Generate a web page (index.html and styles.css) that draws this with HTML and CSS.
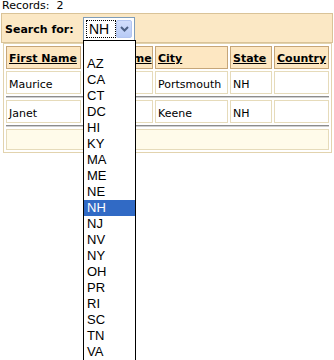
FILE: index.html
```html
<!DOCTYPE html>
<html>
<head>
<meta charset="utf-8">
<title>Records</title>
<link rel="stylesheet" href="styles.css">
</head>
<body>
<div class="records">Records:&nbsp; 2</div>
<div class="search">
  <span class="search-label">Search for:</span>
  <div class="select">
    <span class="select-value">NH</span>
    <span class="select-btn"><svg width="9" height="6" viewBox="0 0 9 6"><path d="M1 1 L4.5 4.5 L8 1" fill="none" stroke="#4d6185" stroke-width="2"/></svg></span>
    <ul class="options">
      <li class="opt-blank"></li>
      <li>AZ</li>
      <li>CA</li>
      <li>CT</li>
      <li>DC</li>
      <li>HI</li>
      <li>KY</li>
      <li>MA</li>
      <li>ME</li>
      <li>NE</li>
      <li class="selected">NH</li>
      <li>NJ</li>
      <li>NV</li>
      <li>NY</li>
      <li>OH</li>
      <li>PR</li>
      <li>RI</li>
      <li>SC</li>
      <li>TN</li>
      <li>VA</li>
    </ul>
  </div>
</div>
<div class="grid">
  <div class="hd"><a>First Name</a></div>
  <div class="hd"><a>Last Name</a></div>
  <div class="hd"><a>City</a></div>
  <div class="hd"><a>State</a></div>
  <div class="hd"><a>Country</a></div>

  <div class="cell">Maurice</div>
  <div class="cell"></div>
  <div class="cell">Portsmouth</div>
  <div class="cell">NH</div>
  <div class="cell"></div>
  <div class="sep"></div>

  <div class="cell">Janet</div>
  <div class="cell"></div>
  <div class="cell">Keene</div>
  <div class="cell">NH</div>
  <div class="cell"></div>
  <div class="sep"></div>

  <div class="foot"></div>
</div>
</body>
</html>
```
FILE: styles.css
```css
html {
  height: 100%;
}

body {
  margin: 0;
  min-height: 360px;
  font-family: "DejaVu Sans", Verdana, sans-serif;
  font-size: 11px;
  color: #000;
  background: #fff;
}

.records {
  height: 13px;
  line-height: 11px;
  padding-left: 2px;
}

.search {
  margin: 0 1px;
  height: 30px;
  box-sizing: border-box;
  border: 1px solid #d9c398;
  background: #fbe8c5;
  display: flex;
  align-items: flex-start;
  padding-left: 3px;
}

.search-label {
  font-weight: bold;
  width: 78px;
  line-height: 13px;
  margin-top: 9px;
}

.select {
  position: relative;
  margin-top: 3px;
  width: 52px;
  height: 24px;
  box-sizing: border-box;
  border: 1px solid #7f9db9;
  background: #fff;
  padding: 2px;
  display: flex;
  font-family: "Liberation Sans", Arial, sans-serif;
  font-size: 14px;
}

.select-value {
  width: 30px;
  height: 18px;
  box-sizing: border-box;
  border: 1px dotted #000;
  line-height: 16px;
  padding-left: 2px;
}

.select-btn {
  width: 16px;
  height: 18px;
  box-sizing: border-box;
  border: 1px solid #b3c5f0;
  border-radius: 2px;
  background: linear-gradient(#d2defc, #b8cbf6);
  display: flex;
  align-items: center;
  justify-content: center;
}

.options {
  position: absolute;
  z-index: 5;
  top: 100%;
  left: -1px;
  width: 53px;
  box-sizing: border-box;
  margin: 0;
  padding: 0;
  list-style: none;
  border: 1px solid #000;
  background: #fff;
  font-size: 13px;
}

.options li {
  height: 16px;
  line-height: 16px;
  padding-left: 3px;
}

.options .opt-blank {
  height: 15px;
}

.options .selected {
  background: #316ac5;
  color: #fff;
}

.grid {
  margin: 0 2px 0 3px;
  border: 1px solid #e2d3ae;
  padding: 2px;
  display: grid;
  grid-template-columns: 75px 70px 73px 42px 1fr;
  gap: 2px;
}

.hd {
  height: 23px;
  box-sizing: border-box;
  border: 1px solid #c6a679;
  background: #fde7c2;
  padding: 5px 2px 0;
  line-height: 13px;
  font-weight: bold;
  white-space: nowrap;
  overflow: hidden;
}

.hd a {
  color: #000;
  text-decoration: underline;
}

.cell {
  height: 23px;
  box-sizing: border-box;
  border: 1px solid #e6dbba;
  background: #fff;
  padding: 6px 2px 0;
  line-height: 13px;
  white-space: nowrap;
}

.sep {
  grid-column: 1 / -1;
  height: 2px;
  background: linear-gradient(#8c8c8c 50%, #cfcfcf 50%);
}

.foot {
  grid-column: 1 / -1;
  height: 21px;
  box-sizing: border-box;
  border: 1px solid #e6dbba;
  background: #fffbea;
}
```
